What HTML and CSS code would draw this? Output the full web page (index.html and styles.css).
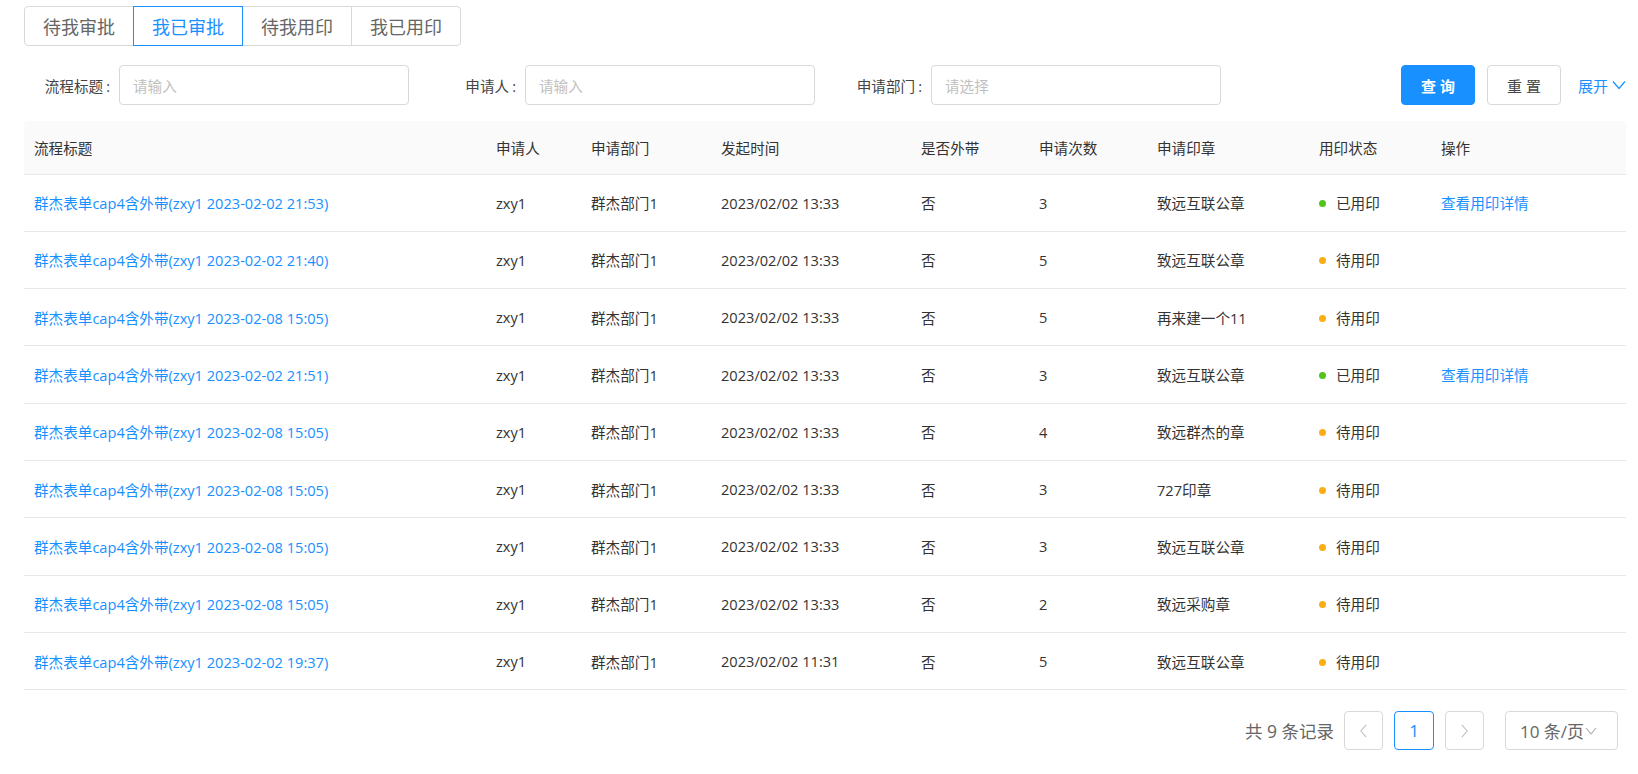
FILE: index.html
```html
<!DOCTYPE html>
<html lang="zh-CN">
<head>
<meta charset="utf-8">
<title>用印管理</title>
<link rel="stylesheet" href="styles.css">
</head>
<body>
<div class="page">
  <div class="tabs">
    <div class="tab">待我审批</div>
    <div class="tab active">我已审批</div>
    <div class="tab">待我用印</div>
    <div class="tab">我已用印</div>
  </div>

  <div class="filters">
    <div class="field">
      <label class="field-label">流程标题<span class="colon">:</span></label>
      <div class="input placeholder">请输入</div>
    </div>
    <div class="field">
      <label class="field-label">申请人<span class="colon">:</span></label>
      <div class="input placeholder">请输入</div>
    </div>
    <div class="field">
      <label class="field-label">申请部门<span class="colon">:</span></label>
      <div class="input placeholder">请选择</div>
    </div>
    <div class="actions">
      <button class="btn btn-primary">查 询</button>
      <button class="btn">重 置</button>
      <a class="expand">展开<svg class="chev" viewBox="0 0 14 10" width="14" height="10"><path d="M1 1.5 L7 8.5 L13 1.5" fill="none" stroke="#1890ff" stroke-width="1.2"/></svg></a>
    </div>
  </div>

  <table class="grid">
    <colgroup>
      <col class="c1"><col class="c2"><col class="c3"><col class="c4"><col class="c5"><col class="c6"><col class="c7"><col class="c8"><col class="c9">
    </colgroup>
    <thead>
      <tr>
        <th>流程标题</th><th>申请人</th><th>申请部门</th><th>发起时间</th><th>是否外带</th><th>申请次数</th><th>申请印章</th><th>用印状态</th><th>操作</th>
      </tr>
    </thead>
    <tbody>
      <tr><td><a class="link">群杰表单cap4含外带(zxy1 2023-02-02 21:53)</a></td><td>zxy1</td><td>群杰部门1</td><td>2023/02/02 13:33</td><td>否</td><td>3</td><td>致远互联公章</td><td><span class="dot green"></span>已用印</td><td><a class="link">查看用印详情</a></td></tr>
      <tr><td><a class="link">群杰表单cap4含外带(zxy1 2023-02-02 21:40)</a></td><td>zxy1</td><td>群杰部门1</td><td>2023/02/02 13:33</td><td>否</td><td>5</td><td>致远互联公章</td><td><span class="dot orange"></span>待用印</td><td></td></tr>
      <tr><td><a class="link">群杰表单cap4含外带(zxy1 2023-02-08 15:05)</a></td><td>zxy1</td><td>群杰部门1</td><td>2023/02/02 13:33</td><td>否</td><td>5</td><td>再来建一个11</td><td><span class="dot orange"></span>待用印</td><td></td></tr>
      <tr><td><a class="link">群杰表单cap4含外带(zxy1 2023-02-02 21:51)</a></td><td>zxy1</td><td>群杰部门1</td><td>2023/02/02 13:33</td><td>否</td><td>3</td><td>致远互联公章</td><td><span class="dot green"></span>已用印</td><td><a class="link">查看用印详情</a></td></tr>
      <tr><td><a class="link">群杰表单cap4含外带(zxy1 2023-02-08 15:05)</a></td><td>zxy1</td><td>群杰部门1</td><td>2023/02/02 13:33</td><td>否</td><td>4</td><td>致远群杰的章</td><td><span class="dot orange"></span>待用印</td><td></td></tr>
      <tr><td><a class="link">群杰表单cap4含外带(zxy1 2023-02-08 15:05)</a></td><td>zxy1</td><td>群杰部门1</td><td>2023/02/02 13:33</td><td>否</td><td>3</td><td>727印章</td><td><span class="dot orange"></span>待用印</td><td></td></tr>
      <tr><td><a class="link">群杰表单cap4含外带(zxy1 2023-02-08 15:05)</a></td><td>zxy1</td><td>群杰部门1</td><td>2023/02/02 13:33</td><td>否</td><td>3</td><td>致远互联公章</td><td><span class="dot orange"></span>待用印</td><td></td></tr>
      <tr><td><a class="link">群杰表单cap4含外带(zxy1 2023-02-08 15:05)</a></td><td>zxy1</td><td>群杰部门1</td><td>2023/02/02 13:33</td><td>否</td><td>2</td><td>致远采购章</td><td><span class="dot orange"></span>待用印</td><td></td></tr>
      <tr><td><a class="link">群杰表单cap4含外带(zxy1 2023-02-02 19:37)</a></td><td>zxy1</td><td>群杰部门1</td><td>2023/02/02 11:31</td><td>否</td><td>5</td><td>致远互联公章</td><td><span class="dot orange"></span>待用印</td><td></td></tr>
    </tbody>
  </table>

  <div class="pager">
    <span class="total">共 9 条记录</span>
    <span class="pbox arrow"><svg viewBox="0 0 10 16" width="9" height="14"><path d="M8 1 L2 8 L8 15" fill="none" stroke="#bfbfbf" stroke-width="1.2"/></svg></span>
    <span class="pbox current">1</span>
    <span class="pbox arrow"><svg viewBox="0 0 10 16" width="9" height="14"><path d="M2 1 L8 8 L2 15" fill="none" stroke="#bfbfbf" stroke-width="1.2"/></svg></span>
    <span class="size">10 条/页<svg viewBox="0 0 12 8" width="12" height="8"><path d="M1 1 L6 7 L11 1" fill="none" stroke="#aaa" stroke-width="1.1"/></svg></span>
  </div>
</div>
</body>
</html>
```

FILE: styles.css
```css
* { box-sizing: border-box; }
html, body { margin: 0; padding: 0; background: #fff; }
body {
  font-family: "Open Sans", "Noto Sans CJK SC", sans-serif;
  color: #333;
  font-size: 14.6px;
}
.page { padding: 6px 12px 0 24px; }

.tabs { display: flex; }
.tab {
  width: 110px;
  height: 40px;
  border: 1px solid #d9d9d9;
  margin-left: -1px;
  display: flex;
  align-items: center;
  justify-content: center;
  font-size: 18px;
  color: #666;
  background: #fff;
}
.tab:first-child { margin-left: 0; border-radius: 4px 0 0 4px; }
.tab:last-child { border-radius: 0 4px 4px 0; }
.tab.active { border-color: #1890ff; color: #1890ff; position: relative; z-index: 1; }

.filters {
  display: flex;
  align-items: center;
  margin-top: 19px;
  height: 40px;
}
.field { display: flex; align-items: center; margin-right: 21px; }
.field-label {
  width: 95px;
  text-align: right;
  padding-right: 9px;
  font-size: 14.6px;
  color: #444;
  white-space: nowrap;
}
.colon { margin-left: 3px; }
.input {
  width: 290px;
  height: 40px;
  border: 1px solid #d9d9d9;
  border-radius: 4px;
  padding: 0 13px;
  display: flex;
  align-items: center;
  font-size: 14.6px;
}
.placeholder { color: #bfbfbf; }

.actions { margin-left: auto; display: flex; align-items: center; }
.btn {
  width: 74px;
  height: 40px;
  border: 1px solid #d9d9d9;
  border-radius: 4px;
  background: #fff;
  font-family: inherit;
  font-size: 15px;
  color: #444;
  margin-left: 12px;
  padding: 0;
}
.btn-primary { background: #1890ff; border-color: #1890ff; color: #fff; font-weight: bold; margin-left: 0; }
.expand {
  margin-left: 17px;
  color: #1890ff;
  font-size: 15px;
  display: flex;
  align-items: center;
}
.chev { margin-left: 4px; }

.grid {
  width: 100%;
  border-collapse: collapse;
  margin-top: 16px;
  table-layout: fixed;
}
.c1 { width: 462px; } .c2 { width: 95px; } .c3 { width: 130px; } .c4 { width: 200px; }
.c5 { width: 118px; } .c6 { width: 118px; } .c7 { width: 162px; } .c8 { width: 122px; } .c9 { width: auto; }
.grid th {
  background: #fafafa;
  height: 53px;
  text-align: left;
  font-weight: normal;
  padding: 0 10px;
  border-bottom: 1px solid #e8e8e8;
  color: #333;
  font-size: 14.6px;
}
.grid thead tr th:first-child { border-top-left-radius: 4px; }
.grid thead tr th:last-child { border-top-right-radius: 4px; }
.grid td {
  height: 57.3px;
  padding: 0 10px;
  border-bottom: 1px solid #e8e8e8;
  font-size: 14.6px;
  color: #333;
  white-space: nowrap;
}
.link { color: #1890ff; text-decoration: none; }
.dot {
  display: inline-block;
  width: 7px;
  height: 7px;
  border-radius: 50%;
  margin-right: 10px;
  vertical-align: 2px;
}
.green { background: #52c41a; }
.orange { background: #faad14; }

.pager {
  display: flex;
  justify-content: flex-end;
  align-items: center;
  margin-top: 21px;
  padding-right: 8px;
}
.total { font-size: 17.5px; color: #666; margin-right: 10px; }
.pbox {
  width: 39px;
  height: 39px;
  border: 1px solid #d9d9d9;
  border-radius: 4px;
  display: flex;
  align-items: center;
  justify-content: center;
  margin-right: 11px;
  font-size: 17px;
}
.pbox.current { border-color: #1890ff; color: #1890ff; width: 40px; }
.size {
  margin-left: 10px;
  width: 113px;
  height: 39px;
  border: 1px solid #d9d9d9;
  border-radius: 4px;
  display: flex;
  align-items: center;
  padding-left: 14px;
  font-size: 17px;
  color: #666;
}
.size svg { margin-left: 1px; }
```
